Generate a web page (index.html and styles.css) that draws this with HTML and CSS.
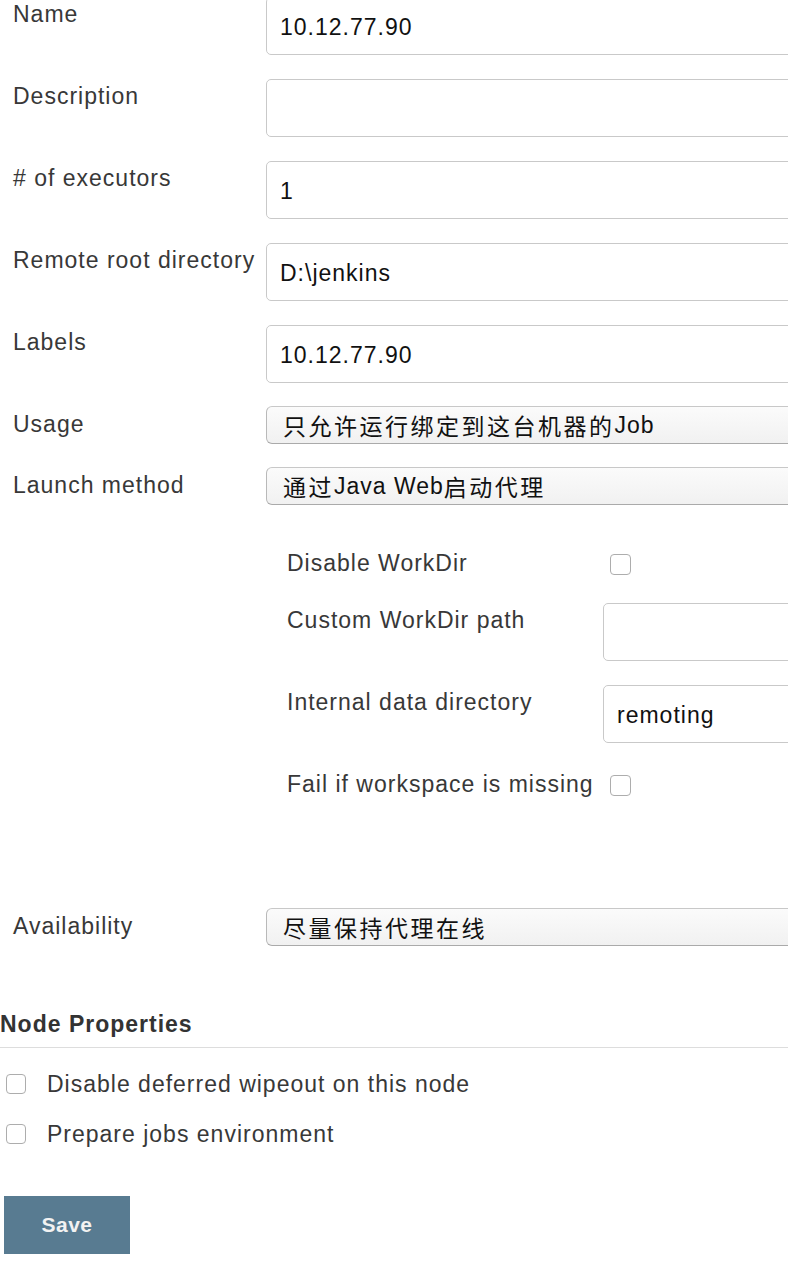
FILE: index.html
```html
<!DOCTYPE html>
<html>
<head>
<meta charset="utf-8">
<link rel="stylesheet" href="styles.css">
</head>
<body>
<form class="form">
  <div class="row">
    <div class="label">Name</div>
    <div class="control"><div class="input">10.12.77.90</div></div>
  </div>
  <div class="row">
    <div class="label">Description</div>
    <div class="control"><div class="input"></div></div>
  </div>
  <div class="row">
    <div class="label"># of executors</div>
    <div class="control"><div class="input">1</div></div>
  </div>
  <div class="row">
    <div class="label">Remote root directory</div>
    <div class="control"><div class="input">D:\jenkins</div></div>
  </div>
  <div class="row">
    <div class="label">Labels</div>
    <div class="control"><div class="input">10.12.77.90</div></div>
  </div>
  <div class="row row-select row-usage">
    <div class="label">Usage</div>
    <div class="control"><div class="select"><span class="cjk">只允许运行绑定到这台机器的</span>Job</div></div>
  </div>
  <div class="row row-select">
    <div class="label">Launch method</div>
    <div class="control"><div class="select"><span class="cjk">通过</span>Java Web<span class="cjk">启动代理</span></div></div>
  </div>
  <div class="nested">
    <div class="sub-row sub-check">
      <div class="label">Disable WorkDir</div>
      <div class="control"><span class="checkbox"></span></div>
    </div>
    <div class="sub-row">
      <div class="label">Custom WorkDir path</div>
      <div class="control"><div class="input"></div></div>
    </div>
    <div class="sub-row">
      <div class="label">Internal data directory</div>
      <div class="control"><div class="input">remoting</div></div>
    </div>
    <div class="sub-row sub-check">
      <div class="label">Fail if workspace is missing</div>
      <div class="control"><span class="checkbox"></span></div>
    </div>
  </div>
  <div class="row row-select row-avail">
    <div class="label">Availability</div>
    <div class="control"><div class="select"><span class="cjk">尽量保持代理在线</span></div></div>
  </div>
  <div class="section-title">Node Properties</div>
  <div class="prop"><span class="checkbox small"></span><span>Disable deferred wipeout on this node</span></div>
  <div class="prop"><span class="checkbox small"></span><span>Prepare jobs environment</span></div>
  <div class="actions"><span class="save">Save</span></div>
</form>
</body>
</html>
```

FILE: styles.css
```css
html, body {
  margin: 0;
  padding: 0;
  overflow: hidden;
  background: #ffffff;
}
body {
  font-family: "Liberation Sans", "Noto Sans CJK SC", sans-serif;
  font-size: 23px;
  letter-spacing: 1px;
  color: #383838;
}
.form {
  display: flex;
  flex-direction: column;
  margin-top: -3px;
}
.row {
  display: grid;
  grid-template-columns: 266px 1fr;
  margin-bottom: 24px;
}
.label {
  padding-left: 13px;
  padding-top: 5px;
  line-height: 24px;
  white-space: nowrap;
}
.control {
  min-width: 0;
  overflow: hidden;
}
.input {
  box-sizing: border-box;
  width: calc(100% + 10px);
  height: 58px;
  border: 1px solid #c9c9c9;
  border-radius: 5px;
  padding: 2px 0 0 13px;
  display: flex;
  align-items: center;
  color: #111111;
  background: #fff;
}
.row-select .label {
  padding-top: 6px;
}
.select {
  box-sizing: border-box;
  width: calc(100% + 10px);
  height: 38px;
  border: 1px solid #b9b9b9;
  border-top-color: #c8c8c8;
  border-bottom-color: #aaaaaa;
  border-radius: 6px;
  background: linear-gradient(#fbfbfb, #f1f1f1);
  padding-left: 16px;
  display: flex;
  align-items: center;
  color: #111111;
  white-space: nowrap;
}
.cjk {
  letter-spacing: 2.5px;
}
.row-usage {
  margin-top: -1px;
  margin-bottom: 23px;
}
.nested {
  display: flex;
  flex-direction: column;
  gap: 24px;
  padding-left: 287px;
  margin-top: 17px;
}
.sub-row {
  display: grid;
  grid-template-columns: 316px 1fr;
}
.sub-row .label {
  padding-left: 0;
}
.sub-check {
  height: 33px;
}
.sub-check .control {
  padding-top: 8px;
}
.checkbox {
  display: block;
  box-sizing: border-box;
  width: 21px;
  height: 21px;
  border: 1.5px solid #adadad;
  border-radius: 4px;
  background: #fff;
  margin-left: 7px;
  flex: none;
}
.row-avail {
  margin-top: 108px;
  margin-bottom: 0;
}
.section-title {
  margin-top: 64px;
  font-weight: bold;
  line-height: 28px;
  padding-bottom: 9px;
  border-bottom: 1px solid #dddddd;
  color: #333333;
}
.prop {
  display: flex;
  align-items: center;
  height: 28px;
  margin-top: 22px;
}
.checkbox.small {
  width: 20px;
  height: 20px;
  margin-left: 6px;
  margin-right: 21px;
}
.actions {
  margin-top: 48px;
  padding-left: 4px;
}
.save {
  display: inline-flex;
  align-items: center;
  justify-content: center;
  width: 126px;
  height: 58px;
  background: #587b91;
  color: #f2f2f2;
  font-weight: bold;
  font-size: 21px;
  letter-spacing: 0.5px;
}
```
